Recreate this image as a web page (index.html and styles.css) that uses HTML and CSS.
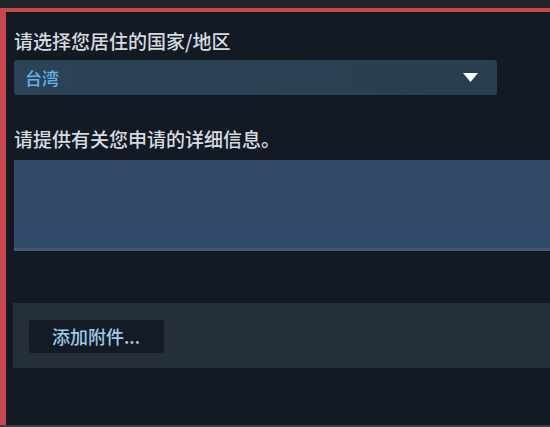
FILE: index.html
```html
<!DOCTYPE html>
<html lang="zh-CN">
<head>
<meta charset="utf-8">
<title>支持请求</title>
<link rel="stylesheet" href="styles.css">
</head>
<body>
<div class="top-strip"></div>
<div class="panel">
  <div class="label label-country">请选择您居住的国家/地区</div>
  <div class="select">
    <span class="select-value">台湾</span>
    <svg class="select-arrow" width="15" height="9" viewBox="0 0 15 9"><polygon points="0,0 15,0 7.5,9" fill="#ffffff"/></svg>
  </div>
  <div class="label label-details">请提供有关您申请的详细信息。</div>
  <div class="textarea"></div>
  <div class="attach-bar">
    <div class="attach-btn">添加附件...</div>
  </div>
</div>
<div class="bottom-strip"></div>
</body>
</html>
```

FILE: styles.css
```css
html, body {
  margin: 0;
  padding: 0;
}
body {
  width: 550px;
  height: 427px;
  overflow: hidden;
  background: #1e2329;
  font-family: "Noto Sans CJK SC", "Noto Sans", sans-serif;
}
.top-strip {
  height: 8px;
  background: #1f2429;
}
.panel {
  height: 417px;
  box-sizing: border-box;
  border-top: 4px solid #c8464d;
  border-left: 6px solid #c8464d;
  background: #131a24;
  padding-left: 8px;
  display: flex;
  flex-direction: column;
  overflow: hidden;
}
.bottom-strip {
  height: 2px;
  background: #3a3f45;
}
.label {
  color: #d6dbe0;
  font-size: 19px;
  font-weight: 500;
  line-height: 24px;
  white-space: nowrap;
}
.label-country {
  margin-top: 17px;
}
.select {
  margin-top: 7px;
  width: 483px;
  height: 35px;
  box-sizing: border-box;
  border-radius: 3px;
  background: linear-gradient(to right, #2c4357, #2a3e51);
  display: flex;
  align-items: center;
  justify-content: space-between;
  padding: 0 19px 0 11px;
}
.select-value {
  color: #5fb4e8;
  font-size: 17px;
  font-weight: 500;
  line-height: 20px;
}
.select-arrow {
  display: block;
}
.label-details {
  margin-top: 32px;
}
.textarea {
  margin-top: 9px;
  height: 88px;
  flex-shrink: 0;
  background: linear-gradient(to bottom, #34496a, #31496a);
  border-bottom: 3px solid #44586f;
  margin-right: -10px;
}
.attach-bar {
  margin-top: 52px;
  margin-left: -1px;
  margin-right: -10px;
  height: 65px;
  flex-shrink: 0;
  box-sizing: border-box;
  background: #252f3c;
  padding: 17px 0 0 16px;
}
.attach-btn {
  width: 135px;
  height: 33px;
  box-sizing: border-box;
  background: #151b25;
  border-radius: 2px;
  color: #9ccbea;
  font-size: 18px;
  font-weight: 500;
  line-height: 33px;
  padding-left: 23px;
  white-space: nowrap;
}
```
